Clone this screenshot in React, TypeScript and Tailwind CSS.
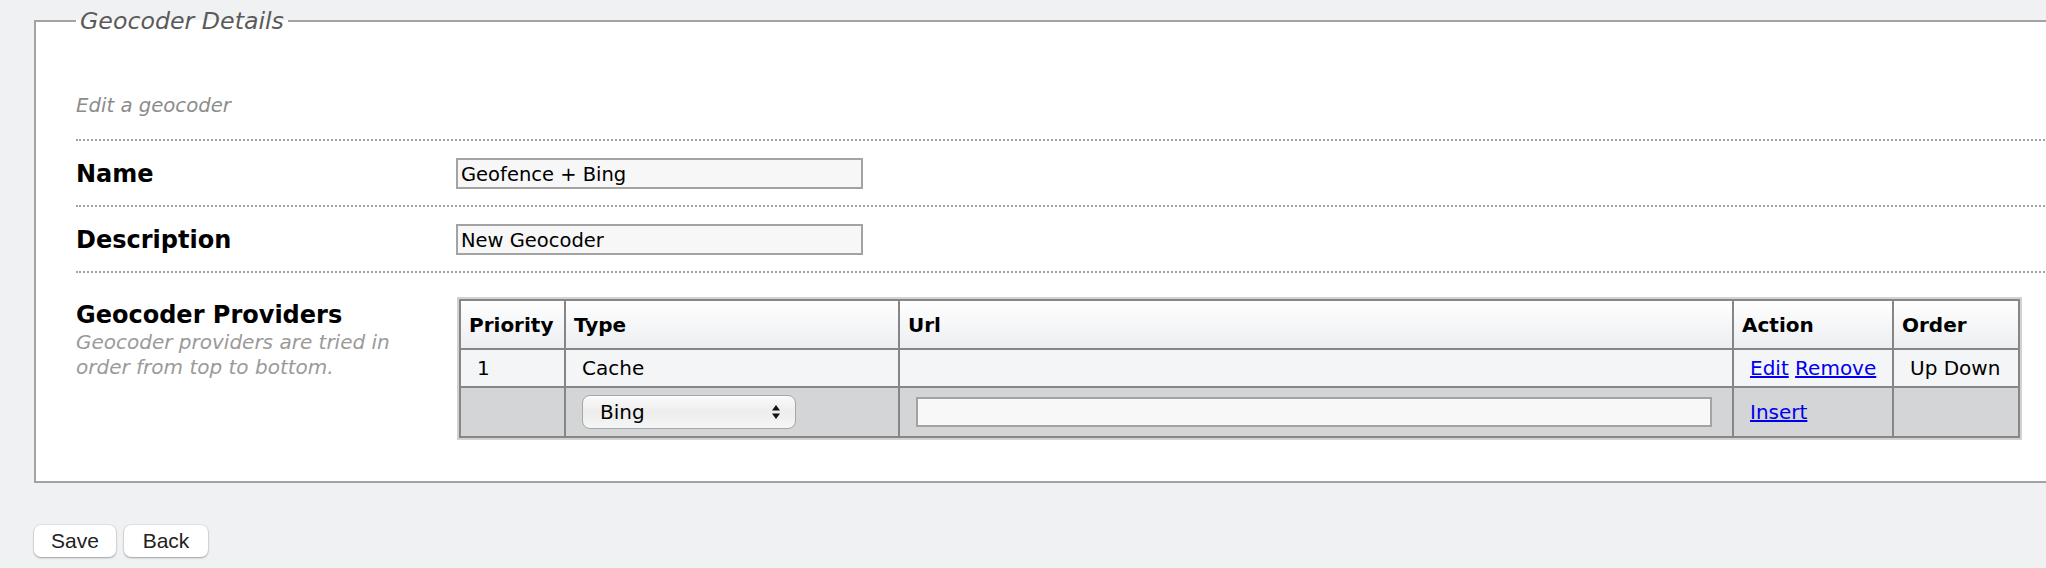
import React from 'react'

function SelectArrows() {
  return (
    <svg width="10" height="16" viewBox="0 0 10 16" className="shrink-0">
      <path d="M5 1 L9 6.5 L1 6.5 Z" fill="#111" />
      <path d="M5 15 L9 9.5 L1 9.5 Z" fill="#111" />
    </svg>
  )
}

function FieldRow({ label, value }: { label: string; value: string }) {
  return (
    <div className="flex h-[66px] items-center border-t-2 border-dotted border-[#a3a3a3]">
      <div className="w-[380px] shrink-0 pt-[2px] text-[24px] font-bold leading-[28px] text-black">{label}</div>
      <div className="flex h-[31px] w-[407px] items-center border-2 border-[#a3a3a3] bg-[#f7f7f7] px-[3px] pt-[3px] text-[19.5px] text-black">
        {value}
      </div>
    </div>
  )
}

export default function App() {
  return (
    <div className="min-h-screen overflow-hidden bg-[#f0f1f3] font-['DejaVu_Sans',sans-serif]">
      <div className="pl-[34px]">
        <fieldset className="w-[2100px] border-2 border-[#a3a3a3] bg-white pb-[41px] pl-[40px]">
          <legend className="px-[4px] text-[23.7px] italic leading-[42px] text-[#5a5a5a]">Geocoder Details</legend>

          <p className="pb-[21px] pt-[52px] text-[19.7px] italic leading-[24px] text-[#8c8c8c]">Edit a geocoder</p>

          <FieldRow label="Name" value="Geofence + Bing" />
          <FieldRow label="Description" value="New Geocoder" />

          {/* Providers */}
          <div className="flex border-t-2 border-dotted border-[#a3a3a3] pt-[24px]">
            <div className="w-[381px] shrink-0 pt-[4px]">
              <div className="text-[24px] font-bold leading-[28px] text-black">Geocoder Providers</div>
              <div className="pt-[1px] text-[20px] italic leading-[25px] text-[#9a9a9a]">
                Geocoder providers are tried in
                <br />
                order from top to bottom.
              </div>
            </div>

            <div className="border-2 border-[#d2d2d2]">
              <table className="w-[1561px] table-fixed border-collapse text-[20px] text-black">
                <colgroup>
                  <col className="w-[105px]" />
                  <col className="w-[334px]" />
                  <col className="w-[834px]" />
                  <col className="w-[160px]" />
                  <col className="w-[126px]" />
                </colgroup>
                <thead>
                  <tr className="h-[49px] bg-gradient-to-b from-white to-[#eceef2]">
                    <th className="border-2 border-[#868686] pl-[8px] text-left font-bold">Priority</th>
                    <th className="border-2 border-[#868686] pl-[8px] text-left font-bold">Type</th>
                    <th className="border-2 border-[#868686] pl-[8px] text-left font-bold">Url</th>
                    <th className="border-2 border-[#868686] pl-[8px] text-left font-bold">Action</th>
                    <th className="border-2 border-[#868686] pl-[8px] text-left font-bold">Order</th>
                  </tr>
                </thead>
                <tbody>
                  <tr className="h-[38px] bg-[#f4f5f7]">
                    <td className="border-2 border-[#868686] pl-[16px]">1</td>
                    <td className="border-2 border-[#868686] pl-[16px]">Cache</td>
                    <td className="border-2 border-[#868686]"></td>
                    <td className="border-2 border-[#868686] pl-[16px]">
                      <a href="#" className="text-[#0000ee] underline">Edit</a>{' '}
                      <a href="#" className="text-[#0000ee] underline">Remove</a>
                    </td>
                    <td className="border-2 border-[#868686] pl-[16px]">Up Down</td>
                  </tr>
                  <tr className="h-[50px] bg-[#d4d5d7]">
                    <td className="border-2 border-[#868686]"></td>
                    <td className="border-2 border-[#868686] pl-[16px]">
                      <div className="flex h-[34px] w-[214px] items-center justify-between rounded-[8px] border border-[#a6a6a6] bg-gradient-to-b from-[#fafafa] via-[#ededed] to-[#f6f6f6] pl-[17px] pr-[14px] shadow-[inset_0_1px_0_rgba(255,255,255,0.9)]">
                        <span>Bing</span>
                        <SelectArrows />
                      </div>
                    </td>
                    <td className="border-2 border-[#868686] pl-[16px]">
                      <div className="h-[30px] w-[796px] border-2 border-[#a3a3a3] bg-[#f8f8f8]" />
                    </td>
                    <td className="border-2 border-[#868686] pl-[16px]">
                      <a href="#" className="text-[#0000ee] underline">Insert</a>
                    </td>
                    <td className="border-2 border-[#868686]"></td>
                  </tr>
                </tbody>
              </table>
            </div>
          </div>
        </fieldset>

        <div className="mt-[42px] flex gap-[8px] font-['Liberation_Sans',sans-serif] text-[21px] text-[#222]">
          <button className="h-[32px] w-[82px] rounded-[7px] bg-white shadow-[0_0_0_1px_rgba(0,0,0,0.05),0_1px_2px_rgba(0,0,0,0.3)]">
            Save
          </button>
          <button className="h-[32px] w-[84px] rounded-[7px] bg-white shadow-[0_0_0_1px_rgba(0,0,0,0.05),0_1px_2px_rgba(0,0,0,0.3)]">
            Back
          </button>
        </div>
      </div>
    </div>
  )
}
